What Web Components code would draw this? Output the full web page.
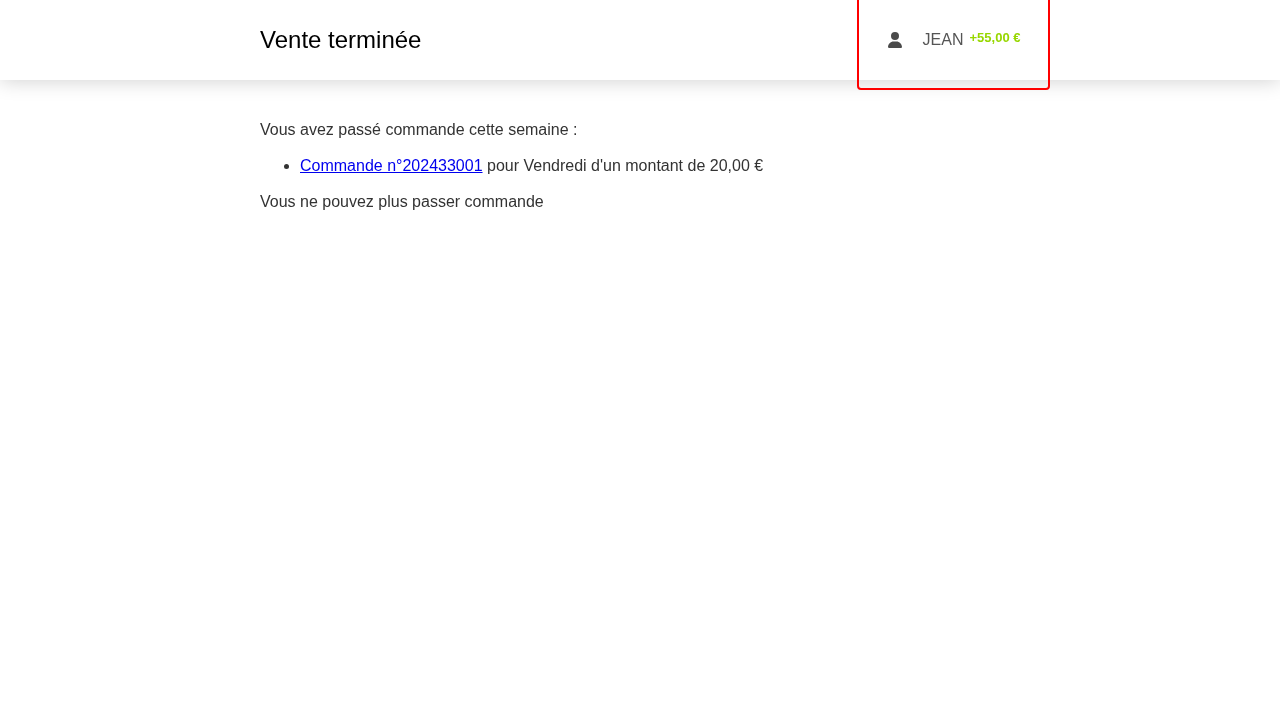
<!DOCTYPE html>
<html lang="fr">
<head>
<meta charset="utf-8">
<title>Vente terminée</title>
<style>
    body{
        margin: 0;
        background: #fff;
        color: #333;
        font-family: "Liberation Sans", Arial, sans-serif;
        font-size: 16px;
    }
</style>
</head>
<body>
<site-header heading="Vente terminée">
    <user-badge name="JEAN" balance="+55,00 €"></user-badge>
</site-header>
<order-summary>
    <p>Vous avez passé commande cette semaine :</p>
    <ul>
        <li><a href="#">Commande n°202433001</a> pour Vendredi d'un montant de 20,00 €</li>
    </ul>
    <p>Vous ne pouvez plus passer commande</p>
</order-summary>

<script>
class SiteHeader extends HTMLElement {
    constructor(){
        super();
        this.attachShadow({ mode: 'open' });
        this.shadowRoot.innerHTML = `
        <style>
            :host{
                display: block;
                height: 80px;
                background: #fff;
                box-shadow: 0 0 20px rgba(0,0,0,.2);
            }
            .inner{
                display: flex;
                justify-content: space-between;
                align-items: center;
                width: 790px;
                height: 80px;
                margin-left: 260px;
                will-change: transform;
            }
            h1{
                margin: 0;
                font-size: 24px;
                font-weight: 400;
                line-height: 28px;
                color: #000;
            }
        </style>
        <div class="inner">
            <h1></h1>
            <slot></slot>
        </div>
        `;
    }

    connectedCallback(){
        this.shadowRoot.querySelector('h1').textContent = this.getAttribute('heading');
    }
}

class UserBadge extends HTMLElement {
    constructor(){
        super();
        this.attachShadow({ mode: 'open' });
        this.shadowRoot.innerHTML = `
        <style>
            :host{
                display: flex;
                align-items: center;
                box-sizing: border-box;
                align-self: flex-start;
                width: 193px;
                height: 100px;
                margin-top: -10px;
                padding: 0 28px 0 29px;
                border: 2px solid #f00;
                border-radius: 4px;
                color: #555;
                white-space: nowrap;
            }
            svg{
                display: block;
                width: 14px;
                height: 16px;
                fill: #4a4a4a;
                flex: none;
            }
            .name{
                margin-left: 20.6px;
                line-height: 20px;
            }
            .balance{
                margin-left: 6px;
                position: relative;
                top: -3px;
                font-size: 13px;
                font-weight: 700;
                color: #97d700;
            }
        </style>
        <svg viewBox="0 0 448 512"><path d="M224 256a128 128 0 1 0 0-256 128 128 0 1 0 0 256zm-45.700 48C79.800 304 0 383.800 0 482.300 0 498.700 13.300 512 29.700 512h388.600c16.400 0 29.700-13.300 29.700-29.700C448 383.800 368.200 304 269.700 304h-91.400z"/></svg>
        <span class="name"></span>
        <span class="balance"></span>
        `;
    }

    connectedCallback(){
        this.shadowRoot.querySelector('.name').textContent = this.getAttribute('name');
        this.shadowRoot.querySelector('.balance').textContent = this.getAttribute('balance');
    }
}

class OrderSummary extends HTMLElement {
    constructor(){
        super();
        this.attachShadow({ mode: 'open' });
        this.shadowRoot.innerHTML = `
        <style>
            :host{
                display: block;
                padding: 40px 0 0 260px;
                line-height: 20px;
                will-change: transform;
            }
            ::slotted(p){
                margin: 0 0 16px;
            }
            ::slotted(ul){
                margin: 0 0 16px;
                padding-left: 40px;
            }
        </style>
        <slot></slot>
        `;
    }
}

customElements.define('site-header', SiteHeader);
customElements.define('user-badge', UserBadge);
customElements.define('order-summary', OrderSummary);
</script>
</body>
</html>
